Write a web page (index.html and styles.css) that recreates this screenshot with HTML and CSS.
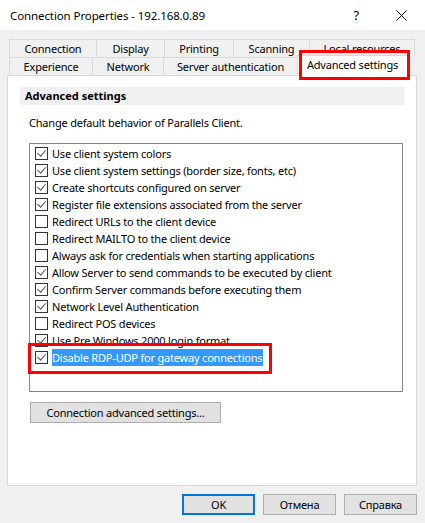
FILE: index.html
```html
<!DOCTYPE html>
<html>
<head>
<meta charset="utf-8">
<link rel="stylesheet" href="styles.css">
</head>
<body>
<div class="window">
  <div class="titlebar">
    <span class="title">Connection Properties - 192.168.0.89</span>
    <span class="help">?</span>
    <svg class="close" width="11" height="11" viewBox="0 0 11 11"><path d="M0.5 0.5 L10.5 10.5 M10.5 0.5 L0.5 10.5" stroke="#000" stroke-width="1" fill="none"/></svg>
  </div>
  <div class="dialog">
    <div class="tabs">
      <div class="tabrow back">
        <div class="tab w-conn">Connection</div>
        <div class="tab w-disp">Display</div>
        <div class="tab w-print">Printing</div>
        <div class="tab w-scan">Scanning</div>
        <div class="tab w-local">Local resources</div>
      </div>
      <div class="tabrow front">
        <div class="tab w-exp">Experience</div>
        <div class="tab w-net">Network</div>
        <div class="tab w-srv">Server authentication</div>
        <div class="tab active w-adv">Advanced settings</div>
      </div>
      <div class="redbox tabmark"></div>
    </div>
    <div class="panel">
      <div class="heading">Advanced settings</div>
      <div class="desc">Change default behavior of Parallels Client.</div>
      <div class="listbox">
        <div class="item"><span class="cb on"></span><span class="lbl">Use client system colors</span></div>
        <div class="item"><span class="cb on"></span><span class="lbl">Use client system settings (border size, fonts, etc)</span></div>
        <div class="item"><span class="cb on"></span><span class="lbl">Create shortcuts configured on server</span></div>
        <div class="item"><span class="cb on"></span><span class="lbl">Register file extensions associated from the server</span></div>
        <div class="item"><span class="cb"></span><span class="lbl">Redirect URLs to the client device</span></div>
        <div class="item"><span class="cb"></span><span class="lbl">Redirect MAILTO to the client device</span></div>
        <div class="item"><span class="cb"></span><span class="lbl">Always ask for credentials when starting applications</span></div>
        <div class="item"><span class="cb on"></span><span class="lbl">Allow Server to send commands to be executed by client</span></div>
        <div class="item"><span class="cb on"></span><span class="lbl">Confirm Server commands before executing them</span></div>
        <div class="item"><span class="cb on"></span><span class="lbl">Network Level Authentication</span></div>
        <div class="item"><span class="cb"></span><span class="lbl">Redirect POS devices</span></div>
        <div class="item"><span class="cb on"></span><span class="lbl">Use Pre Windows 2000 login format</span></div>
        <div class="item"><span class="cb on"></span><span class="lbl selected">Disable RDP-UDP for gateway connections</span></div>
        <div class="redbox itemmark"></div>
      </div>
      <button class="btn advbtn">Connection advanced settings...</button>
    </div>
    <div class="footer">
      <button class="btn fbtn default">OK</button>
      <button class="btn fbtn">Отмена</button>
      <button class="btn fbtn">Справка</button>
    </div>
  </div>
</div>
</body>
</html>
```
FILE: styles.css
```css
html, body {
  margin: 0;
  padding: 0;
}
body {
  width: 425px;
  height: 523px;
  overflow: hidden;
  background: #f0f0f0;
  font-family: "Noto Sans", "DejaVu Sans", sans-serif;
  font-size: 11px;
  letter-spacing: -0.2px;
  color: #000;
}
.window {
  width: 425px;
  height: 523px;
  display: flex;
  flex-direction: column;
}
.titlebar {
  height: 30px;
  background: #fff;
  display: flex;
  align-items: center;
  padding-left: 10px;
  box-sizing: border-box;
}
.title {
  font-size: 11.5px;
  letter-spacing: -0.1px;
  flex: 1;
}
.help {
  font-size: 13px;
  margin-right: 37px;
}
.close {
  margin-right: 18px;
}
.dialog {
  flex: 1;
  display: flex;
  flex-direction: column;
  padding-top: 9px;
}
.tabs {
  position: relative;
  margin-left: 9px;
  height: 36px;
}
.tabrow {
  display: flex;
  height: 18px;
}
.tab {
  box-sizing: border-box;
  height: 18px;
  border: 1px solid #d9d9d9;
  border-right: none;
  border-bottom: none;
  background: #f0f0f0;
  display: flex;
  align-items: center;
  justify-content: center;
  white-space: nowrap;
  line-height: 16px;
}
.tabrow .tab:last-child {
  border-right: 1px solid #d9d9d9;
}
.w-conn { width: 87px; }
.w-disp { width: 68px; }
.w-print { width: 69px; }
.w-scan { width: 76px; }
.w-local { width: 106px; }
.w-exp { width: 83px; }
.w-net { width: 71px; }
.w-srv { width: 134px; }
.w-adv { width: 111px; }
.tab.active {
  background: #fff;
  height: 21px;
  margin-top: -2px;
  border: 1px solid #d9d9d9;
  border-bottom: none;
  position: relative;
  z-index: 2;
  padding-bottom: 3px;
}
.redbox {
  position: absolute;
  border: 3px solid #ff0000;
  box-sizing: border-box;
  z-index: 5;
  pointer-events: none;
}
.tabmark {
  left: 290px;
  top: 11px;
  width: 111px;
  height: 30px;
}
.panel {
  box-sizing: border-box;
  margin-left: 7px;
  width: 410px;
  height: 411px;
  background: #fff;
  border: 1px solid #d9d9d9;
  padding: 11px 12px 0 12px;
  display: flex;
  flex-direction: column;
  align-items: flex-start;
}
.heading {
  align-self: stretch;
  height: 18px;
  background: #f0f0f0;
  font-weight: bold;
  letter-spacing: 0;
  padding-left: 5px;
  line-height: 18px;
}
.desc {
  margin-top: 10px;
  margin-left: 9px;
  line-height: 16px;
}
.listbox {
  position: relative;
  box-sizing: border-box;
  margin-top: 12px;
  margin-left: 9px;
  width: 374px;
  height: 249px;
  border: 1px solid #828790;
  padding-top: 1px;
  padding-left: 5px;
  display: flex;
  flex-direction: column;
}
.item {
  height: 17px;
  display: flex;
  align-items: center;
  white-space: nowrap;
}
.cb {
  box-sizing: border-box;
  width: 13px;
  height: 13px;
  border: 1px solid #333;
  background: #fff;
  margin-right: 4px;
  flex: none;
  position: relative;
}
.cb.on::after {
  content: "";
  position: absolute;
  left: 3px;
  top: 0px;
  width: 4px;
  height: 7px;
  border-right: 1px solid #555;
  border-bottom: 1px solid #555;
  transform: rotate(40deg);
}
.lbl {
  height: 17px;
  line-height: 17px;
}
.lbl.selected {
  background: #3399ff;
  color: #fff;
  padding-right: 1px;
}
.itemmark {
  left: -2px;
  top: 199px;
  width: 244px;
  height: 31px;
}
.btn {
  font-family: inherit;
  font-size: 11px;
  letter-spacing: -0.2px;
  color: #000;
  background: #e1e1e1;
  border: 1px solid #adadad;
  box-sizing: border-box;
  padding: 0;
  height: 21px;
  line-height: 17px;
}
.advbtn {
  margin-top: 10px;
  margin-left: 10px;
  width: 191px;
}
.footer {
  display: flex;
  justify-content: flex-end;
  gap: 8px;
  padding-right: 8px;
  margin-top: 8px;
}
.fbtn {
  width: 73px;
}
.fbtn.default {
  border: 2px solid #0078d7;
}
```
